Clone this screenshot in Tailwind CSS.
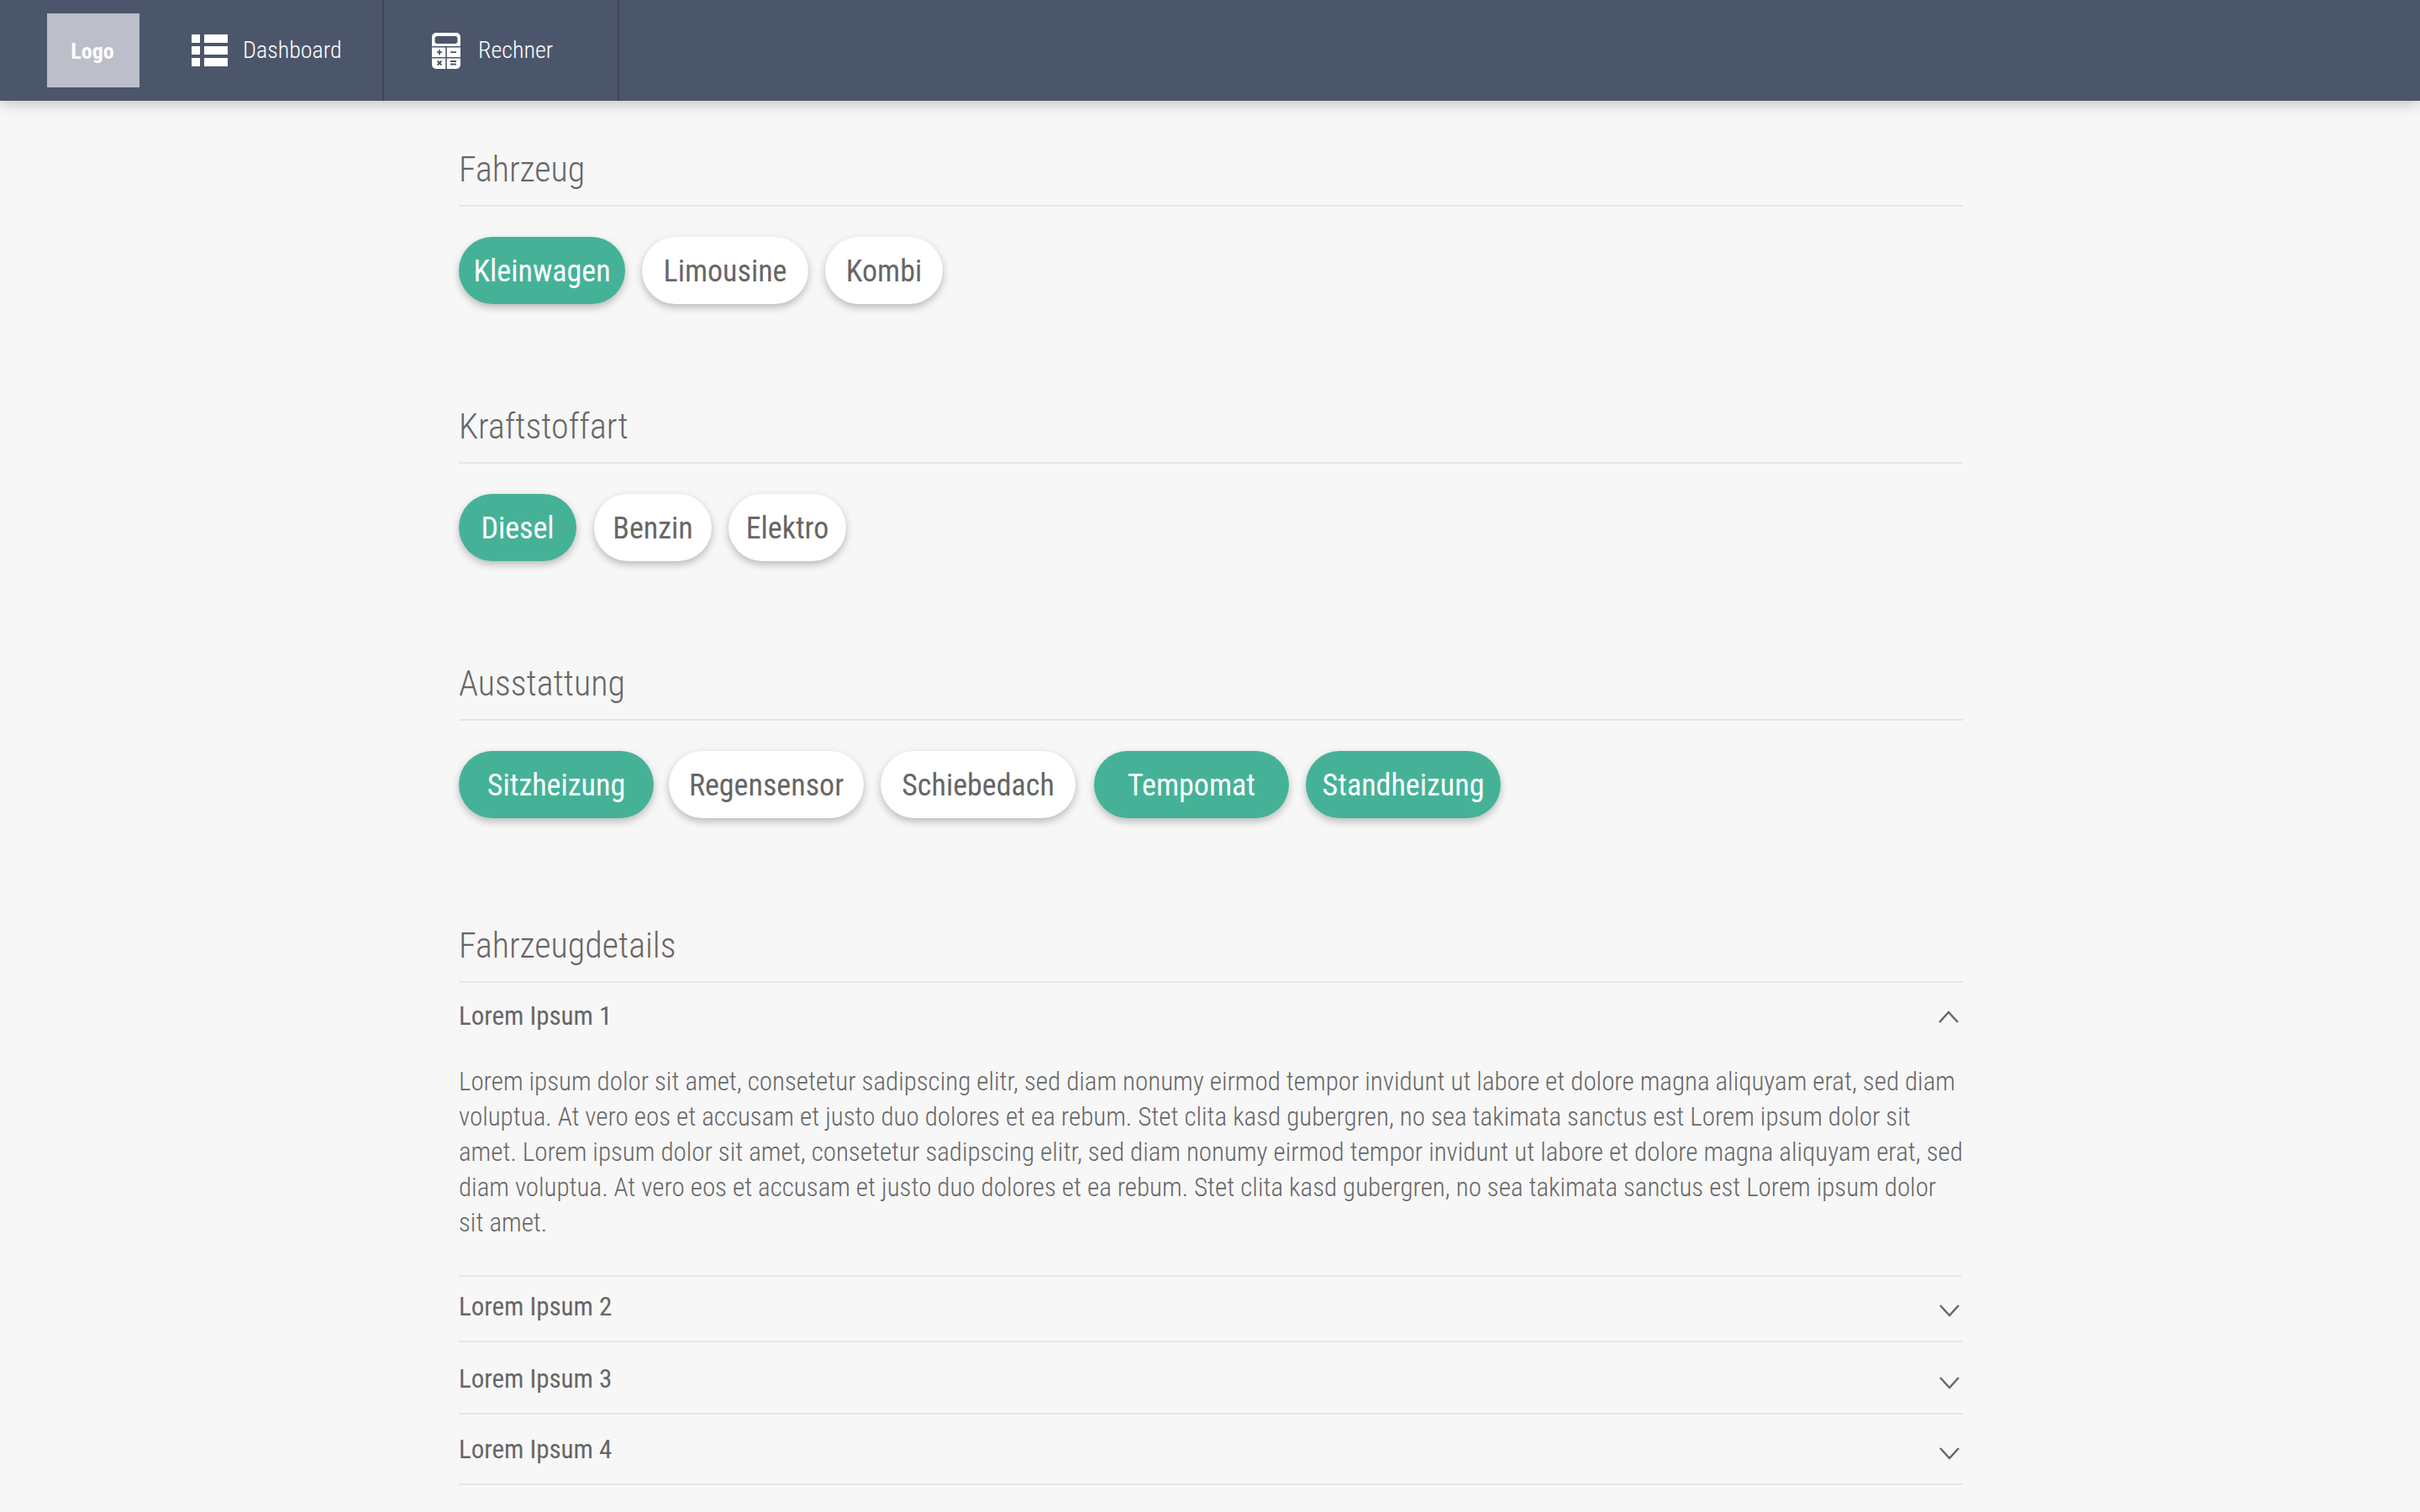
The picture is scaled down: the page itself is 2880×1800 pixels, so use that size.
<!DOCTYPE html>
<html lang="de">
<head>
<meta charset="utf-8">
<title>Fahrzeug</title>
<script src="https://cdn.jsdelivr.net/npm/@tailwindcss/browser@4"></script>
</head>
<body class="bg-[#f7f7f7] text-[#666666] font-['Roboto_Condensed',Roboto,sans-serif] [font-stretch:75%] h-[1800px] overflow-hidden">
    <!-- Top Navigation -->
    <header class="h-[120px] bg-[#4c566b] flex shadow-[0_4px_16px_rgba(0,0,0,0.2)] text-white">
        <div class="w-[56px]"></div>
        <div class="w-[110px] h-[88px] mt-4 pt-[2px] pr-[2px] bg-[#bcbfc9] flex items-center justify-center text-[26px] font-bold [font-stretch:100%]">Logo</div>
        <a class="w-[291px] pl-[62px] flex items-center gap-[18px] text-[28px] font-light border-r-2 border-[#3d4659]">
            <svg width="43" height="38" viewBox="0 0 43 38" fill="#fff"><rect width="10" height="10"/><rect x="15" width="28" height="10"/><rect y="14" width="10" height="10"/><rect x="15" y="14" width="28" height="10"/><rect y="28" width="10" height="10"/><rect x="15" y="28" width="28" height="10"/></svg>
            Dashboard
        </a>
        <a class="w-[280px] pl-[57px] flex items-center gap-[21px] text-[28px] font-light border-r-2 border-[#3d4659]">
            <svg width="34" height="43" viewBox="0 0 34 43"><rect width="34" height="43" rx="5" fill="#fff"/><rect x="3.5" y="4" width="27" height="9" rx="3" fill="#4c566b"/><rect y="16" width="34" height="1.5" fill="#4c566b"/><rect x="16.2" y="17" width="1.6" height="26" fill="#4c566b"/><rect y="29" width="34" height="1.5" fill="#4c566b"/><path d="M6 23.2h6M9 20.2v6M22 23.2h7M22 34h7M22 37.5h7M6.5 33.5l5 5M11.5 33.5l-5 5" stroke="#4c566b" stroke-width="1.8"/></svg>
            Rechner
        </a>
    </header>

    <main class="ml-[546px] w-[1790px]">
        <!-- Fahrzeug -->
        <section class="h-[306px]">
            <h2 class="h-[126px] pt-[56px] text-[42px] leading-[52px] font-light border-b-2 border-[#e6e6e6]">Fahrzeug</h2>
            <div class="flex gap-5 mt-[36px] text-[36px]">
                <button class="w-[198px] h-20 pt-[2px] rounded-full bg-[#45b298] text-white shadow-[0_4px_10px_rgba(0,0,0,0.25)]">Kleinwagen</button>
                <button class="w-[198px] h-20 pt-[2px] rounded-full bg-white shadow-[0_4px_10px_rgba(0,0,0,0.25)]">Limousine</button>
                <button class="w-[140px] h-20 pt-[2px] rounded-full bg-white shadow-[0_4px_10px_rgba(0,0,0,0.25)]">Kombi</button>
            </div>
        </section>

        <!-- Kraftstoffart -->
        <section class="h-[306px]">
            <h2 class="h-[126px] pt-[56px] text-[42px] leading-[52px] font-light border-b-2 border-[#e6e6e6]">Kraftstoffart</h2>
            <div class="flex mt-[36px] text-[36px]">
                <button class="w-[140px] h-20 pt-[2px] rounded-full bg-[#45b298] text-white shadow-[0_4px_10px_rgba(0,0,0,0.25)]">Diesel</button>
                <button class="w-[140px] h-20 pt-[2px] ml-[21px] rounded-full bg-white shadow-[0_4px_10px_rgba(0,0,0,0.25)]">Benzin</button>
                <button class="w-[140px] h-20 pt-[2px] ml-[20px] rounded-full bg-white shadow-[0_4px_10px_rgba(0,0,0,0.25)]">Elektro</button>
            </div>
        </section>

        <!-- Ausstattung -->
        <section class="h-[312px]">
            <h2 class="h-[126px] pt-[56px] text-[42px] leading-[52px] font-light border-b-2 border-[#e6e6e6]">Ausstattung</h2>
            <div class="flex mt-[36px] text-[36px]">
                <button class="w-[232px] h-20 pt-[2px] rounded-full bg-[#45b298] text-white shadow-[0_4px_10px_rgba(0,0,0,0.25)]">Sitzheizung</button>
                <button class="w-[232px] h-20 pt-[2px] ml-[18px] rounded-full bg-white shadow-[0_4px_10px_rgba(0,0,0,0.25)]">Regensensor</button>
                <button class="w-[232px] h-20 pt-[2px] ml-[20px] rounded-full bg-white shadow-[0_4px_10px_rgba(0,0,0,0.25)]">Schiebedach</button>
                <button class="w-[232px] h-20 pt-[2px] ml-[22px] rounded-full bg-[#45b298] text-white shadow-[0_4px_10px_rgba(0,0,0,0.25)]">Tempomat</button>
                <button class="w-[232px] h-20 pt-[2px] ml-[20px] rounded-full bg-[#45b298] text-white shadow-[0_4px_10px_rgba(0,0,0,0.25)]">Standheizung</button>
            </div>
        </section>

        <!-- Fahrzeugdetails -->
        <section>
            <h2 class="h-[126px] pt-[56px] text-[42px] leading-[52px] font-light border-b-2 border-[#e6e6e6]">Fahrzeugdetails</h2>
            <div class="h-[350px] border-b-2 border-[#e6e6e6] w-[1788px]">
                <div class="h-[80px] flex items-center justify-between pr-[3px] text-[31px]">
                    <span>Lorem Ipsum 1</span>
                    <svg width="24" height="15" viewBox="0 0 24 15" fill="none" stroke="#666" stroke-width="2.5"><path d="M1 14 12 2l11 12"/></svg>
                </div>
                <p class="mt-[17px] w-[1790px] text-[31px] leading-[42px] font-light">Lorem ipsum dolor sit amet, consetetur sadipscing elitr, sed diam nonumy eirmod tempor invidunt ut labore et dolore magna aliquyam erat, sed diam voluptua. At vero eos et accusam et justo duo dolores et ea rebum. Stet clita kasd gubergren, no sea takimata sanctus est Lorem ipsum dolor sit amet. Lorem ipsum dolor sit amet, consetetur sadipscing elitr, sed diam nonumy eirmod tempor invidunt ut labore et dolore magna aliquyam erat, sed diam voluptua. At vero eos et accusam et justo duo dolores et ea rebum. Stet clita kasd gubergren, no sea takimata sanctus est Lorem ipsum dolor sit amet.</p>
            </div>
            <div class="h-[78px] pt-[18px] flex items-start justify-between pr-[4px] text-[31px] leading-[36px] border-b-2 border-[#e6e6e6]">
                <span>Lorem Ipsum 2</span>
                <svg class="mt-[15px]" width="24" height="15" viewBox="0 0 24 15" fill="none" stroke="#666" stroke-width="2.5"><path d="M1 1l11 12L23 1"/></svg>
            </div>
            <div class="h-[86px] pt-[26px] flex items-start justify-between pr-[4px] text-[31px] leading-[36px] border-b-2 border-[#e6e6e6]">
                <span>Lorem Ipsum 3</span>
                <svg class="mt-[15px]" width="24" height="15" viewBox="0 0 24 15" fill="none" stroke="#666" stroke-width="2.5"><path d="M1 1l11 12L23 1"/></svg>
            </div>
            <div class="h-[84px] pt-[24px] flex items-start justify-between pr-[4px] text-[31px] leading-[36px] border-b-2 border-[#e6e6e6]">
                <span>Lorem Ipsum 4</span>
                <svg class="mt-[15px]" width="24" height="15" viewBox="0 0 24 15" fill="none" stroke="#666" stroke-width="2.5"><path d="M1 1l11 12L23 1"/></svg>
            </div>
        </section>
    </main>
</body>
</html>
